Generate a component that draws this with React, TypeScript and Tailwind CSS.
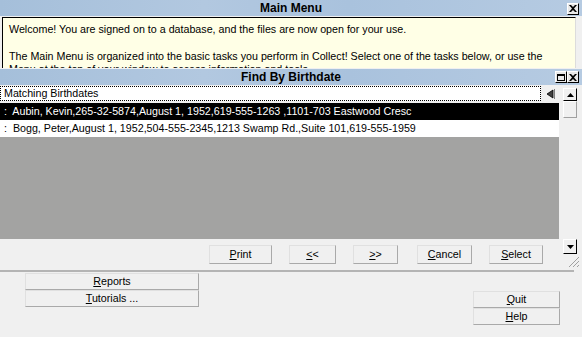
import React from "react";

const U = ({ c }: { c: string }) => <span className="underline underline-offset-[1px]">{c}</span>;

function Btn({ first, rest, className = "" }: { first: string; rest: string; className?: string }) {
  return (
    <div
      className={
        "flex items-center justify-center border border-t-[#e0e0e0] border-l-[#e0e0e0] border-r-[#a9a9a9] border-b-[#a9a9a9] bg-[#f0f0f0] text-black " +
        className
      }
    >
      <span>
        <U c={first} />
        {rest}
      </span>
    </div>
  );
}

function TitleBar({ title, children }: { title: string; children?: React.ReactNode }) {
  return (
    <div className="relative flex h-full items-center justify-center bg-[linear-gradient(90deg,#a5bfda_0%,#b2c8e0_35%,#a9c2dd_60%,#b6cbe2_100%)] font-bold text-[12px] text-black">
      <span>{title}</span>
      <div className="absolute right-[3px] top-0 bottom-0 flex items-center gap-0">{children}</div>
    </div>
  );
}

function XBtn() {
  return (
    <div className="flex h-[12px] w-[12px] items-center justify-center border border-t-white border-l-white border-r-black border-b-black bg-[#e8e8e8]">
      <svg width="8" height="7" viewBox="0 0 8 7">
        <path d="M0 0 L2 0 L4 2 L6 0 L8 0 L5 3.5 L8 7 L6 7 L4 5 L2 7 L0 7 L3 3.5 Z" fill="black" />
      </svg>
    </div>
  );
}

function RestoreBtn() {
  return (
    <div className="flex h-[12px] w-[12px] items-center justify-center border border-t-white border-l-white border-r-black border-b-black bg-[#e8e8e8]">
      <div className="h-[7px] w-[8px] border border-black border-t-2" />
    </div>
  );
}

export default function App() {
  return (
    <div
      className="relative h-[337px] w-[582px] overflow-hidden bg-[#f0f0f0] text-[10.7px] leading-[13px] text-black"
      style={{ fontFamily: '"Liberation Sans", Arial, sans-serif' }}
    >
      {/* Main Menu title */}
      <div className="h-[16px]">
        <TitleBar title="Main Menu">
          <div className="pt-[1px]">
            <XBtn />
          </div>
        </TitleBar>
      </div>
      {/* Yellow welcome area */}
      <div className="ml-[2px] mt-[1px] h-[51px] w-[574px] overflow-hidden border-l border-t border-l-black border-t-black border-r border-r-[#dcdcdc] bg-[#ffffe6] px-[6px] pt-[5px]">
        <p>Welcome! You are signed on to a database, and the files are now open for your use.</p>
        <p className="mt-[14px]">
          The Main Menu is organized into the basic tasks you perform in Collect! Select one of the tasks below, or use the
        </p>
        <p>Menu at the top of your window to access information and tools.</p>
      </div>
      {/* Find By Birthdate title */}
      <div className="mt-[1px] h-[16px]">
        <TitleBar title="Find By Birthdate">
          <RestoreBtn />
          <XBtn />
        </TitleBar>
      </div>
      {/* list area */}
      <div className="flex">
        <div className="flex w-[559px] flex-col">
          <div className="flex h-[17px] items-center pr-[4px]">
            <div className="flex h-[15px] flex-1 items-center border border-dotted border-black bg-white pl-[3px]">
              Matching Birthdates
            </div>
            <svg width="10" height="10" viewBox="0 0 10 10" className="ml-[4px]">
              <path d="M8 1 L2 5 L8 9 Z" fill="#404040" stroke="black" strokeWidth="0.8" />
              <line x1="9.5" y1="0" x2="9.5" y2="10" stroke="#808080" />
            </svg>
          </div>
          <div className="h-[1px]" />
          <div className="flex h-[17px] items-center whitespace-nowrap bg-black pl-[4px] text-white">
            :&nbsp; Aubin, Kevin,265-32-5874,August 1, 1952,619-555-1263 ,1101-703 Eastwood Cresc
          </div>
          <div className="flex h-[17px] items-center whitespace-nowrap bg-white pl-[4px]">
            :&nbsp; Bogg, Peter,August 1, 1952,504-555-2345,1213 Swamp Rd.,Suite 101,619-555-1959
          </div>
          <div className="h-[102px] bg-[#a3a3a2]" />
          <div className="flex h-[31px] items-start pt-[6px]">
            <Btn first="P" rest="rint" className="ml-[209px] h-[19px] w-[63px]" />
            <Btn first="<" rest="<" className="ml-[17px] h-[19px] w-[47px]" />
            <Btn first=">" rest=">" className="ml-[17px] h-[19px] w-[45px]" />
            <Btn first="C" rest="ancel" className="ml-[19px] h-[19px] w-[55px]" />
            <Btn first="S" rest="elect" className="ml-[17px] h-[19px] w-[54px]" />
          </div>
        </div>
        <div className="relative w-[23px] bg-[#f0f0f0]">
          <div className="absolute left-[4px] top-[3px] flex h-[13px] w-[14px] items-center justify-center border border-t-white border-l-white border-r-black border-b-black bg-[#f0f0f0]">
            <svg width="7" height="4" viewBox="0 0 7 4">
              <path d="M3.5 0 L7 4 L0 4 Z" fill="black" />
            </svg>
          </div>
          <div className="absolute left-[4px] top-[16px] h-[17px] w-[14px] border border-t-white border-l-white border-r-[#a0a0a0] border-b-[#a0a0a0] bg-[#f0f0f0]" />
          <div className="absolute left-[4px] top-[154px] flex h-[15px] w-[14px] items-center justify-center border border-t-white border-l-white border-r-black border-b-black bg-[#f0f0f0]">
            <svg width="7" height="4" viewBox="0 0 7 4">
              <path d="M0 0 L7 0 L3.5 4 Z" fill="black" />
            </svg>
          </div>
          <svg className="absolute left-[9px] top-[171px]" width="12" height="12" viewBox="0 0 12 12">
            <line x1="11" y1="1" x2="1" y2="11" stroke="#a0a0a0" />
            <line x1="11" y1="5" x2="5" y2="11" stroke="#a0a0a0" />
            <line x1="11" y1="9" x2="9" y2="11" stroke="#a0a0a0" />
          </svg>
        </div>
      </div>
      {/* separator */}
      <div className="h-[2px] w-[574px] bg-[#b4b4b4]" />
      {/* bottom buttons */}
      <div className="relative flex">
        <div className="ml-[25px] mt-[1px] flex flex-col">
          <Btn first="R" rest="eports" className="h-[17px] w-[174px]" />
          <Btn first="T" rest="utorials ..." className="h-[17px] w-[174px]" />
        </div>
        <div className="ml-[274px] mt-[19px] flex flex-col">
          <Btn first="Q" rest="uit" className="h-[17px] w-[87px]" />
          <Btn first="H" rest="elp" className="h-[17px] w-[87px]" />
        </div>
      </div>
    </div>
  );
}
